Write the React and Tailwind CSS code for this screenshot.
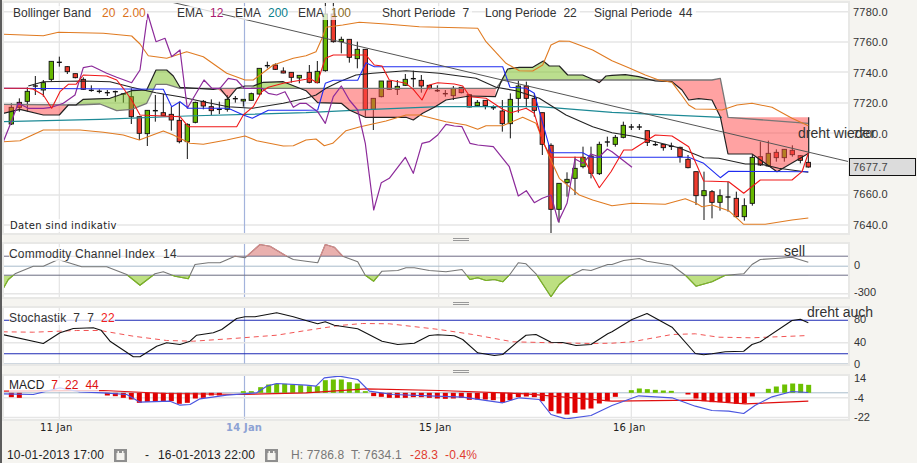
import React from "react";

// points are read off 3x crops: [x, y] in crop space, off = crop left, top = crop top
const z = (off, pts, top = 0) => pts.map(([x, y]) => [off + x / 3, top + y / 3]);
const P = (pts) => pts.map((p) => p[0].toFixed(1) + "," + p[1].toFixed(1)).join(" ");

const candles = [
  [0, [
    [10, 370, 470], [34, 310, 375, 322, 372, "g"], [58, 295, 335, 307, 322, "r"], [82, 262, 335, 274, 304, "g"],
    [106, 228, 285, 258], [130, 240, 290, 248, 270, "g"], [154, 184, 245, 184, 238, "g"], [178, 170, 200, 187],
    [202, 198, 222, 200, 215, "r"], [226, 221, 235, 221, 233, "r"], [250, 232, 270, 238, 268, "r"], [274, 256, 275, 271],
    [298, 268, 280, 274], [322, 270, 288, 278], [346, 272, 305, 275], [370, 280, 308, 282], [394, 265, 372, 290, 350, "r"],
    [418, 350, 420, 350, 400, "r"], [442, 331, 438, 331, 401, "g"], [466, 285, 365, 332], [490, 282, 347, 338, 347, "r"],
    [514, 320, 392, 343, 360, "r"], [538, 305, 430, 361, 425, "r"], [562, 370, 477, 373, 425, "g"], [586, 305, 370, 307, 367, "g"],
    [610, 300, 328, 304, 318, "r"], [634, 298, 345, 320, 332, "r"], [658, 305, 342, 328], [682, 285, 335, 298, 328, "g"],
    [706, 288, 308, 296], [730, 298, 320, 298, 303, "g"], [754, 278, 302, 281, 301, "g"], [778, 205, 285, 205, 282, "g"],
    [802, 185, 205, 197], [826, 190, 210, 195, 208, "r"], [850, 202, 220, 213, 219, "r"], [874, 217, 248, 217, 232, "r"],
    [898, 226, 250, 226, 234, "g"],
  ]],
  [306, [
    [10, 195, 250, 217, 247, "r"], [34, 183, 250, 214, 248, "g"], [58, 0, 215, 42, 212, "g"], [82, 0, 128, 42, 125, "r"],
    [106, 110, 160, 118, 125, "g"], [130, 118, 188, 118, 172, "r"], [154, 125, 205, 148, 176, "g"], [178, 148, 350, 148, 328, "r"],
    [202, 295, 390, 295, 328, "g"], [226, 243, 292, 243, 290, "g"], [250, 243, 270, 243, 268, "r"], [274, 240, 285, 259, 268, "g"],
    [298, 222, 258, 238, 256, "g"], [322, 212, 262, 236], [346, 225, 278, 241, 258, "r"], [370, 256, 268, 256, 266, "r"],
    [394, 256, 276, 272], [418, 270, 290, 281], [442, 258, 300, 265, 287, "g"], [466, 262, 280, 262, 278, "r"],
    [490, 284, 322, 284, 321, "r"], [514, 300, 320, 307, 317, "g"], [538, 300, 328, 301, 317, "r"], [562, 316, 330, 323],
    [589, 300, 395, 333, 371, "r"], [613, 280, 415, 298, 371, "g"], [637, 242, 338, 258, 295, "g"], [661, 245, 322, 258, 295, "r"],
    [685, 280, 350, 295, 331, "r"], [709, 338, 465, 338, 433, "r"], [735, 430, 700, 436, 628, "r"], [759, 550, 668, 550, 628, "g"],
    [783, 517, 590, 538, 548, "g"], [807, 470, 585, 505, 535, "g"], [831, 440, 505, 472, 500, "g"], [855, 440, 535, 468, 520, "r"],
    [880, 425, 525, 433, 521, "g"], [904, 410, 440, 426],
  ]],
  [612, [
    [10, 405, 440, 412, 433, "g"], [34, 365, 415, 376, 412, "g"], [58, 372, 390, 381], [82, 372, 390, 381],
    [106, 392, 438, 392, 427, "r"], [130, 425, 438, 434], [154, 433, 452, 433, 443, "r"], [178, 428, 450, 439],
    [204, 440, 488, 442, 470, "r"], [228, 465, 505, 478, 503, "r"], [252, 515, 615, 515, 587, "r"], [276, 515, 660, 572, 587, "g"],
    [300, 570, 655, 575, 607, "r"], [324, 568, 632, 587, 607, "g"], [348, 545, 635, 591], [373, 575, 652, 595, 650, "r"],
    [397, 595, 662, 617, 650, "g"], [421, 465, 617, 472, 610, "g"], [445, 425, 498, 470, 495, "r"], [469, 422, 500, 460, 498, "g"],
    [493, 448, 485, 457, 473, "r"], [517, 448, 485, 448, 473, "g"], [541, 436, 470, 451, 464, "r"], [565, 465, 490, 467, 481, "r"],
    [589, 460, 503, 487, 501, "r"],
  ]],
];

const upperBand = [
  ...z(0, [[10, 103], [130, 107], [175, 97], [310, 100], [395, 108], [420, 132], [445, 167], [500, 175], [560, 155], [610, 170], [680, 220], [735, 240], [760, 240], [820, 195], [880, 175], [918, 167]]),
  ...z(306, [[30, 155], [50, 110], [60, 82], [110, 75], [160, 67], [240, 72], [340, 80], [515, 85], [540, 125], [600, 190], [640, 212], [680, 213], [710, 195], [735, 135], [760, 123], [790, 124], [860, 150], [918, 182]]),
  ...z(612, [[50, 203], [100, 225], [140, 240], [180, 247], [205, 280], [230, 315], [250, 327], [300, 328], [330, 330], [375, 315], [420, 310], [480, 322], [540, 355], [589, 377]]),
];
const lowerBand = [
  ...z(0, [[10, 425], [60, 422], [130, 390], [240, 390], [310, 397], [370, 405], [418, 420], [490, 393], [520, 405], [570, 430], [610, 433], [680, 420], [735, 408], [770, 422], [850, 438], [880, 437], [918, 420]]),
  ...z(306, [[30, 417], [55, 437], [80, 430], [120, 392], [160, 381], [240, 363], [300, 345], [340, 345], [420, 365], [480, 375], [515, 388], [540, 377], [590, 377], [650, 352], [690, 370], [730, 470], [760, 535], [820, 585], [860, 600], [918, 617]]),
  ...z(612, [[60, 610], [160, 613], [220, 596], [250, 608], [270, 620], [300, 615], [350, 632], [395, 673], [460, 673], [540, 660], [589, 654]]),
];
const purple = [
  ...z(0, [[10, 425], [30, 375], [55, 310], [85, 325], [130, 325], [155, 322], [190, 310], [225, 285], [250, 203], [275, 198], [320, 220], [350, 232], [395, 248], [420, 210], [443, 42], [468, 125], [495, 115], [515, 170], [540, 150], [562, 325], [612, 240], [636, 265], [660, 265], [685, 235], [710, 240], [733, 265], [785, 265], [805, 280], [830, 285], [855, 275], [880, 322], [900, 310], [918, 310]]),
  ...z(306, [[35, 335], [58, 370], [82, 290], [106, 258], [130, 300], [155, 330], [178, 430], [203, 630], [226, 548], [250, 535], [298, 472], [322, 520], [348, 430], [370, 425], [395, 405], [420, 373], [445, 378], [468, 380], [492, 430], [515, 435], [562, 440], [586, 470], [610, 500], [637, 588], [661, 572], [685, 608], [709, 595], [735, 585], [757, 665], [783, 610], [807, 477], [831, 490], [855, 462], [880, 470], [904, 447], [918, 455]]),
  ...z(612, [[60, 502]]),
];
const tenkan = [
  ...z(0, [[10, 265], [80, 265], [100, 268], [130, 285], [155, 325], [180, 275], [205, 253], [228, 253], [250, 225], [320, 228], [350, 240], [370, 265], [395, 300], [420, 345], [540, 350], [565, 380], [710, 380], [730, 345], [760, 320], [785, 275], [805, 262], [850, 250], [918, 238]]),
  ...z(306, [[10, 235], [34, 248], [58, 175], [82, 165], [180, 165], [205, 195], [228, 198], [250, 240], [300, 250], [322, 268], [348, 300], [370, 255], [395, 248], [445, 252], [470, 258], [492, 290], [540, 295], [590, 328], [615, 338], [660, 325], [685, 340], [710, 425], [735, 472], [830, 472], [880, 563], [915, 515]]),
  ...z(612, [[35, 450], [60, 450], [130, 405], [180, 408], [230, 440], [275, 543], [350, 545], [395, 580], [445, 540], [540, 540], [570, 515], [589, 460]]),
];
const kijun = [
  ...z(0, [[10, 265], [490, 268], [515, 320], [540, 305], [565, 325], [685, 325], [730, 345], [757, 355], [805, 331], [918, 331]]),
  ...z(306, [[35, 330], [58, 250], [82, 241], [155, 241], [180, 188], [205, 200], [590, 200], [612, 262], [660, 265], [685, 280], [735, 458], [830, 458], [855, 472], [918, 472]]),
  ...z(612, [[230, 472], [275, 490], [325, 533], [350, 514], [589, 515]]),
];
const ema100 = [
  ...z(0, [[85, 258], [130, 245], [250, 243], [330, 245], [395, 262], [440, 272], [468, 278], [540, 290], [610, 305], [685, 320], [757, 325], [850, 310], [918, 295]]),
  ...z(306, [[30, 285], [60, 265], [100, 245], [150, 225], [200, 220], [300, 212], [400, 220], [510, 235], [570, 262], [630, 272], [700, 295], [780, 345], [860, 380], [918, 398]]),
  ...z(612, [[60, 408], [130, 425], [200, 443], [275, 473], [320, 475], [400, 492], [445, 492], [500, 505], [589, 517]]),
];
const ema200 = [
  ...z(0, [[10, 365], [300, 358], [560, 348], [918, 338]]),
  ...z(306, [[200, 328], [400, 320], [700, 320], [918, 337]]),
  ...z(612, [[330, 352]]),
];
const spanA = [
  ...z(0, [[10, 340], [60, 328], [130, 345], [178, 345], [205, 315], [228, 315], [250, 298], [330, 295], [395, 272], [440, 270], [468, 210], [500, 210], [520, 228], [540, 262], [640, 268], [660, 265], [685, 295], [710, 265], [735, 258], [760, 258], [790, 247], [850, 245], [918, 272]]),
  ...z(306, [[35, 308], [106, 310], [130, 330], [178, 352], [300, 352], [322, 360], [350, 340], [385, 322], [420, 300], [490, 288], [568, 290], [585, 245], [605, 207], [640, 202], [680, 202], [712, 183], [730, 198], [760, 198], [785, 225], [830, 225], [870, 242], [880, 248], [900, 228], [918, 226]]),
  ...z(612, [[40, 224], [80, 230], [130, 243], [180, 245], [210, 270], [230, 300], [260, 296], [300, 300], [325, 350], [348, 462], [420, 462], [495, 515], [590, 460], [590, 352]]),
];
const spanB = [
  ...z(0, [[10, 313], [228, 315], [300, 312], [350, 332], [395, 328], [440, 310], [468, 253], [500, 253], [540, 265], [918, 265]]),
  ...z(306, [[570, 265], [590, 240], [918, 240]]),
  ...z(612, [[300, 240], [325, 235], [348, 352], [589, 370]]),
];

const pinkAreas = [
  z(0, [[10, 313], [228, 315], [205, 315], [178, 345], [130, 345], [60, 328], [10, 340]]),
  z(0, [[650, 265], [710, 265], [685, 295]]),
  [...z(0, [[905, 265]]), ...z(306, [[570, 265], [568, 290], [490, 288], [420, 300], [385, 322], [350, 340], [322, 360], [300, 352], [178, 352], [130, 330], [106, 310], [35, 308]]), ...z(0, [[918, 272]])],
  z(306, [[865, 240], [892, 240], [880, 248]]),
  z(612, [[130, 240], [300, 240], [325, 235], [348, 352], [589, 352], [589, 460], [495, 515], [420, 462], [348, 462], [325, 350], [300, 300], [260, 296], [230, 300], [210, 270], [180, 245], [130, 243]]),
];
const greenAreas = [
  z(0, [[228, 315], [250, 298], [330, 295], [395, 272], [440, 270], [468, 210], [500, 210], [520, 228], [540, 262], [540, 265], [500, 253], [468, 253], [440, 310], [395, 328], [350, 332], [300, 312]]),
  z(0, [[750, 265], [760, 258], [790, 247], [850, 245], [900, 265]]),
  [...z(306, [[578, 252], [590, 240], [865, 240], [830, 225], [785, 225], [760, 198], [730, 198], [712, 183], [680, 202], [640, 202], [605, 207]])],
  [...z(306, [[892, 240], [900, 228], [918, 226]]), ...z(612, [[40, 224], [80, 230], [130, 243], [130, 240]])],
];

const cci = [
  ...z(0, [[8, 165], [25, 135], [45, 118], [100, 95], [130, 95], [175, 75], [245, 97], [320, 97], [380, 120], [420, 152], [465, 118], [490, 112], [525, 125], [565, 133], [585, 90], [625, 85], [660, 85], [705, 65], [735, 70], [780, 30], [810, 35], [860, 65], [880, 75], [918, 80]], 235),
  ...z(306, [[35, 85], [58, 30], [85, 38], [110, 65], [155, 82], [178, 122], [203, 140], [228, 110], [275, 108], [300, 100], [325, 100], [370, 108], [420, 112], [468, 105], [492, 135], [515, 130], [540, 138], [565, 135], [590, 142], [610, 122], [637, 85], [660, 88], [690, 118], [735, 187], [760, 150], [790, 125], [830, 105], [855, 108], [905, 90], [918, 90]], 235),
  ...z(612, [[35, 78], [82, 72], [105, 80], [180, 92], [220, 122], [252, 155], [300, 142], [340, 122], [395, 118], [420, 90], [445, 75], [490, 72], [540, 68], [589, 83]], 235),
];
const stochK = [
  ...z(0, [[8, 300], [130, 327], [180, 295], [220, 282], [280, 280], [303, 287], [330, 320], [400, 367], [420, 367], [470, 335], [500, 325], [540, 330], [570, 320], [590, 302], [640, 295], [665, 285], [710, 252], [735, 247], [765, 247], [830, 235], [880, 247], [918, 258]], 235),
  ...z(306, [[35, 268], [58, 262], [85, 272], [155, 283], [228, 320], [275, 330], [325, 326], [370, 303], [395, 301], [445, 304], [470, 315], [515, 355], [565, 363], [590, 360], [637, 320], [660, 302], [690, 300], [735, 323], [770, 324], [810, 333], [855, 330], [905, 298], [918, 292]], 235),
  ...z(612, [[60, 255], [105, 237], [180, 278], [250, 357], [275, 361], [300, 358], [340, 352], [395, 350], [420, 330], [445, 322], [540, 258], [565, 254], [589, 265]], 235),
];
const stochD = [
  ...z(0, [[8, 292], [100, 293], [230, 288], [300, 288], [400, 305], [500, 318], [580, 320], [700, 312], [830, 302], [918, 288]], 235),
  ...z(306, [[100, 273], [170, 267], [250, 268], [400, 285], [500, 300], [620, 322], [740, 325], [860, 327], [918, 326]], 235),
  ...z(612, [[60, 322], [180, 300], [250, 298], [320, 308], [420, 310], [540, 305], [589, 303]], 235),
];
const macdBlue = [
  ...z(0, [[8, 478], [100, 480], [180, 460], [240, 472], [310, 475], [380, 480], [420, 503], [510, 500], [540, 512], [570, 510], [600, 493], [680, 482], [770, 475], [800, 455], [830, 447], [918, 452]], 235),
  ...z(306, [[30, 455], [55, 430], [100, 425], [155, 435], [190, 470], [260, 480], [470, 488], [590, 505], [640, 490], [700, 495], [735, 540], [780, 553], [855, 543], [918, 513]], 235),
  ...z(612, [[80, 484], [180, 490], [250, 515], [300, 528], [350, 530], [395, 537], [430, 512], [480, 487], [540, 471], [589, 474]], 235),
];
const macdRed = [
  ...z(0, [[8, 470], [310, 468], [500, 477], [730, 480], [918, 475]], 235),
  ...z(306, [[180, 463], [400, 468], [660, 478], [918, 500]], 235),
  ...z(612, [[250, 497], [400, 508], [589, 500]], 235),
];
const macdBars = [
  [0, [[34, 488], [58, 490], [322, 483], [346, 485], [370, 490], [394, 495], [418, 505], [442, 502], [466, 502], [490, 502], [514, 500], [538, 508], [562, 505], [586, 492], [610, 490], [634, 483], [658, 483], [730, 470], [754, 470], [782, 458], [806, 450], [830, 448], [854, 448], [878, 450], [902, 452]]],
  [306, [[10, 455], [34, 455], [58, 437], [82, 435], [106, 435], [130, 443], [154, 447], [178, 470], [203, 485], [226, 487], [250, 490], [274, 490], [298, 490], [322, 488], [346, 488], [370, 490], [394, 492], [418, 493], [442, 492], [466, 490], [490, 496], [514, 495], [538, 495], [562, 497], [590, 504], [612, 497], [637, 488], [661, 486], [685, 488], [709, 500], [735, 530], [759, 537], [783, 540], [807, 535], [831, 525], [855, 522], [880, 507], [904, 500]]],
  [612, [[10, 487], [58, 467], [82, 462], [106, 464], [130, 466], [154, 468], [178, 469], [228, 480], [252, 492], [276, 500], [300, 503], [324, 503], [348, 503], [373, 508], [397, 506], [421, 486], [469, 463], [493, 456], [518, 450], [542, 447], [566, 448], [590, 451]]],
];

const Line = ({ pts, color, w = 1.2, ...rest }) => (
  <polyline points={P(pts)} fill="none" stroke={color} strokeWidth={w} strokeLinejoin="round" {...rest} />
);
const HLine = ({ y, color = "#e6e6e6", w = 1.5 }) => <line x1="3" x2="849" y1={y} y2={y} stroke={color} strokeWidth={w} />;
const VLines = ({ y1, y2 }) => (
  <>
    <line x1="59.3" x2="59.3" y1={y1} y2={y2} stroke="#e4e4e4" strokeWidth="1.2" />
    <line x1="438.7" x2="438.7" y1={y1} y2={y2} stroke="#e4e4e4" strokeWidth="1.2" />
    <line x1="631.3" x2="631.3" y1={y1} y2={y2} stroke="#e4e4e4" strokeWidth="1.2" />
    <line x1="244.5" x2="244.5" y1={y1} y2={y2} stroke="#a3b3dc" strokeWidth="1.2" />
  </>
);

const Candles = () =>
  candles.map(([off, list]) =>
    list.map(([zx, wt, wb, bt, bb, c], i) => {
      const x = off + zx / 3;
      return (
        <g key={off + "-" + i}>
          <line x1={x} x2={x} y1={wt / 3} y2={wb / 3} stroke="#111" strokeWidth="1" />
          {c ? (
            <rect x={x - 2.2} y={bt / 3} width="4.4" height={Math.max((bb - bt) / 3, 1)} fill={c === "g" ? "#66b800" : "#ee3b2e"} stroke="#111" strokeWidth="0.9" />
          ) : bt ? (
            <line x1={x - 2.5} x2={x + 2.5} y1={bt / 3} y2={bt / 3} stroke="#111" strokeWidth="1.4" />
          ) : null}
        </g>
      );
    }),
  );

const MainChart = () => (
  <svg className="block" width="846" height="232" viewBox="3 2 846 232">
    {[11.7, 42, 72, 103, 133, 164, 195, 225].map((y) => (
      <HLine key={y} y={y} />
    ))}
    <VLines y1={2} y2={234} />
    <Candles />
    {pinkAreas.map((a, i) => (
      <polygon key={i} points={P(a)} fill="rgba(255,70,70,.5)" />
    ))}
    {greenAreas.map((a, i) => (
      <polygon key={i} points={P(a)} fill="rgba(120,190,30,.5)" />
    ))}
    <Line pts={ema200} color="#1d8a96" />
    <Line pts={spanB} color="#777" w={1.3} />
    <Line pts={spanA} color="#222" w={1.2} />
    <Line pts={ema100} color="#222" w={1.1} />
    <Line pts={upperBand} color="#e07b22" w={1.1} />
    <Line pts={lowerBand} color="#e07b22" w={1.1} />
    <Line pts={purple} color="#8c2a9a" />
    <Line pts={kijun} color="#1f2cf0" w={1.1} />
    <Line pts={tenkan} color="#f01818" w={1.1} />
    <line x1="166.7" y1="1" x2="849" y2="161.7" stroke="#555" strokeWidth="1" />
  </svg>
);

const CciChart = () => {
  const fillPts = [[cci[0][0], 275.7], ...cci, [cci[cci.length - 1][0], 275.7]];
  const topPts = [[cci[0][0], 256.7], ...cci, [cci[cci.length - 1][0], 256.7]];
  return (
    <svg className="block" width="846" height="55" viewBox="3 243.5 846 55">
      <defs>
        <clipPath id="cciLow">
          <rect x="3" y="275.7" width="846" height="24" />
        </clipPath>
        <clipPath id="cciHigh">
          <rect x="3" y="243" width="846" height="13.7" />
        </clipPath>
      </defs>
      <VLines y1={244} y2={298} />
      <HLine y={294.3} />
      <HLine y={266.7} color="#a9bccb" w={1} />
      <polygon points={P(fillPts)} fill="#bde081" clipPath="url(#cciLow)" />
      <polygon points={P(topPts)} fill="#e9b0ae" clipPath="url(#cciHigh)" />
      <HLine y={256.7} color="#6f6f88" w={1} />
      <HLine y={275.7} color="#6f6f88" w={1} />
      <Line pts={cci} color="#777" w={1.1} />
      <Line pts={cci} color="#7cbb1c" w={1.1} clipPath="url(#cciLow)" />
      <Line pts={cci} color="#d98a88" w={1.1} clipPath="url(#cciHigh)" />
    </svg>
  );
};

const StochChart = () => (
  <svg className="block" width="846" height="58" viewBox="3 307.5 846 58">
    <VLines y1={308} y2={365} />
    <HLine y={343.3} />
    <HLine y={364.6} color="#bfcad4" />
    <HLine y={320.7} color="#1c28b4" w={1.1} />
    <HLine y={354.3} color="#1c28b4" w={1.1} />
    <Line pts={stochD} color="#f25555" w={1} strokeDasharray="5 4" />
    <Line pts={stochK} color="#111" w={1.1} />
  </svg>
);

const MacdChart = () => (
  <svg className="block" width="846" height="45" viewBox="3 375.5 846 45">
    <VLines y1={376} y2={420} />
    <HLine y={398.3} />
    <HLine y={418} />
    <HLine y={393.3} color="#a9bccb" w={1} />
    {macdBars.map(([off, list]) =>
      list.map(([zx, zy]) => {
        const top = Math.min(zy, 475);
        const h = Math.abs(zy - 475) / 3;
        return <rect key={off + "-" + zx} x={off + zx / 3 - 2.5} y={235 + top / 3} width="5" height={h} fill={zy < 475 ? "#6cc000" : "#e00000"} />;
      }),
    )}
    <Line pts={macdRed} color="#e01010" />
    <Line pts={macdBlue} color="#4a55e0" />
  </svg>
);

const Handle = () => (
  <div className="flex flex-col gap-[1px] w-[16px] ml-[450px]">
    <div className="h-[1px] bg-[#999]" />
    <div className="h-[1px] bg-[#999]" />
    <div className="h-[1px] bg-[#999]" />
  </div>
);

const CalIcon = () => (
  <svg width="13" height="13" viewBox="0 0 13 13" className="shrink-0">
    <rect width="13" height="13" fill="#8e8e8e" />
    <rect x="2.5" y="4" width="8" height="7" fill="#f5f4f0" />
    <rect x="3.5" y="2" width="1.5" height="2" fill="#f5f4f0" />
    <rect x="8" y="2" width="1.5" height="2" fill="#f5f4f0" />
  </svg>
);

const Panel = ({ children, legend }) => (
  <div className="relative w-[846px] shrink-0 bg-white outline-2 -outline-offset-1 outline-[#e8e8e6]">
    {children}
    {legend}
  </div>
);

const Tag = ({ className = "", children }) => (
  <div className={"flex items-center gap-[7px] whitespace-nowrap bg-white/75 text-[#333] " + className}>{children}</div>
);

export default function App() {
  return (
    <div className="relative w-[917px] h-[463px] overflow-hidden bg-[#f5f4f0] border-l-2 border-[#5c5c5c] pl-[1px] pt-[2px] font-['Liberation_Sans',sans-serif]">
      <div className="flex h-[232px]">
        <Panel
          legend={
            <div className="absolute left-[10px] top-[4px] flex text-[12px] leading-[14px]">
              <Tag className="w-[134px]">
                <span className="mr-[4px]">Bollinger Band</span>
                <span className="text-[#d9701a]">20</span>
                <span className="text-[#d9701a]">2.00</span>
              </Tag>
              <Tag className="w-[45px] ml-[30px]">
                <span>EMA</span>
                <span className="text-[#a8196e]">12</span>
              </Tag>
              <Tag className="w-[52px] ml-[13px]">
                <span>EMA</span>
                <span className="text-[#0a7f8e]">200</span>
              </Tag>
              <Tag className="w-[53px] ml-[11px]">
                <span>EMA</span>
                <span className="text-[#8a6a1e]">100</span>
              </Tag>
              <Tag className="w-[90px] ml-[31px]">
                <span>Short Periode</span>
                <span>7</span>
              </Tag>
              <Tag className="w-[95px] ml-[13px]">
                <span>Long Periode</span>
                <span>22</span>
              </Tag>
              <Tag className="w-[102px] ml-[14px]">
                <span>Signal Periode</span>
                <span>44</span>
              </Tag>
            </div>
          }
        >
          <MainChart />
          <div className="absolute left-[7px] bottom-[2px] bg-white/75 font-['DejaVu_Sans',sans-serif] text-[10px] leading-[13px] tracking-[0.35px] text-[#222]">
            Daten sind indikativ
          </div>
        </Panel>
        <div className="flex flex-col pt-[4px] pl-[4px] text-[11px] leading-[12px] text-[#333] tracking-[0.2px]">
          <span className="h-[30.4px] shrink-0">7780.0</span>
          <span className="h-[30.4px] shrink-0">7760.0</span>
          <span className="h-[30.4px] shrink-0">7740.0</span>
          <span className="h-[30.4px] shrink-0">7720.0</span>
          <span className="h-[60.6px] shrink-0">7700.0</span>
          <span className="h-[30.4px] shrink-0">7660.0</span>
          <span className="h-[12px] shrink-0">7640.0</span>
        </div>
      </div>

      <div className="h-[9px] flex items-end"><Handle /></div>

      <div className="flex h-[55px]">
        <Panel
          legend={
            <Tag className="absolute left-[6px] top-[4px] gap-[8px] text-[12px] leading-[14px] tracking-[0.2px]">
              <span>Commodity Channel Index</span>
              <span>14</span>
            </Tag>
          }
        >
          <CciChart />
        </Panel>
        <div className="flex flex-col justify-between pt-[16px] pl-[5px] text-[11px] leading-[12px] text-[#333]">
          <span>0</span>
          <span>-300</span>
        </div>
      </div>

      <div className="h-[9px] flex items-end"><Handle /></div>

      <div className="flex h-[58px]">
        <Panel
          legend={
            <Tag className="absolute left-[6px] top-[4px] text-[12px] leading-[14px] tracking-[0.2px]">
              <span>Stochastik</span>
              <span>7</span>
              <span>7</span>
              <span className="text-[#f02020]">22</span>
            </Tag>
          }
        >
          <StochChart />
        </Panel>
        <div className="flex flex-col justify-between pt-[6px] pl-[5px] h-[63px] text-[11px] leading-[12px] text-[#333]">
          <span>80</span>
          <span>40</span>
          <span>0</span>
        </div>
      </div>

      <div className="h-[10px] flex items-end"><Handle /></div>

      <div className="flex h-[45px]">
        <Panel
          legend={
            <Tag className="absolute left-[6px] top-[3px] text-[12px] leading-[14px]">
              <span className="text-[#222]">MACD</span>
              <span className="text-[#e01010]">7</span>
              <span className="text-[#e01010]">22</span>
              <span className="text-[#e01010]">44</span>
            </Tag>
          }
        >
          <MacdChart />
        </Panel>
        <div className="flex flex-col justify-between pl-[5px] h-[51px] -mt-[3px] text-[11px] leading-[12px] text-[#333]">
          <span>14</span>
          <span>-4</span>
          <span>-22</span>
        </div>
      </div>

      <div className="flex mt-[2px] text-[10px] leading-[12px] tracking-[0.2px] text-[#222] font-['DejaVu_Sans',sans-serif]">
        <span className="w-[32px] ml-[37px] text-center whitespace-nowrap">11 Jan</span>
        <span className="w-[32px] ml-[154px] text-center whitespace-nowrap font-bold text-[#8da2d4]">14 Jan</span>
        <span className="w-[32px] ml-[161px] text-center whitespace-nowrap">15 Jan</span>
        <span className="w-[32px] ml-[162px] text-center whitespace-nowrap">16 Jan</span>
      </div>

      <div className="flex items-center mt-[14px] text-[12px] leading-[14px] tracking-[0.15px] text-[#222]">
        <span className="ml-[4px] w-[107px] whitespace-nowrap">10-01-2013 17:00</span>
        <CalIcon />
        <span className="ml-[18px] w-[13px]">-</span>
        <span className="w-[107px] whitespace-nowrap">16-01-2013 22:00</span>
        <CalIcon />
        <span className="ml-[13px] w-[60px] whitespace-nowrap text-[#777]">H: 7786.8</span>
        <span className="w-[59px] whitespace-nowrap text-[#777]">T: 7634.1</span>
        <span className="w-[35px] text-[#e03c30]">-28.3</span>
        <span className="text-[#e03c30]">-0.4%</span>
      </div>

      <div className="absolute left-[847px] top-[158px] w-[67px] h-[18px] bg-[#dcdcdc] border border-[#111] pl-[3px] text-[11px] leading-[17px] text-[#444] tracking-[0.2px]">
        7677.7
      </div>
      <span className="absolute left-[796px] top-[125px] text-[14px] leading-[16px] text-[#333] whitespace-nowrap">dreht wieder</span>
      <span className="absolute left-[782px] top-[243px] text-[14px] leading-[16px] text-[#333]">sell</span>
      <span className="absolute left-[805px] top-[304px] text-[14px] leading-[16px] text-[#333] whitespace-nowrap">dreht auch</span>
    </div>
  );
}
